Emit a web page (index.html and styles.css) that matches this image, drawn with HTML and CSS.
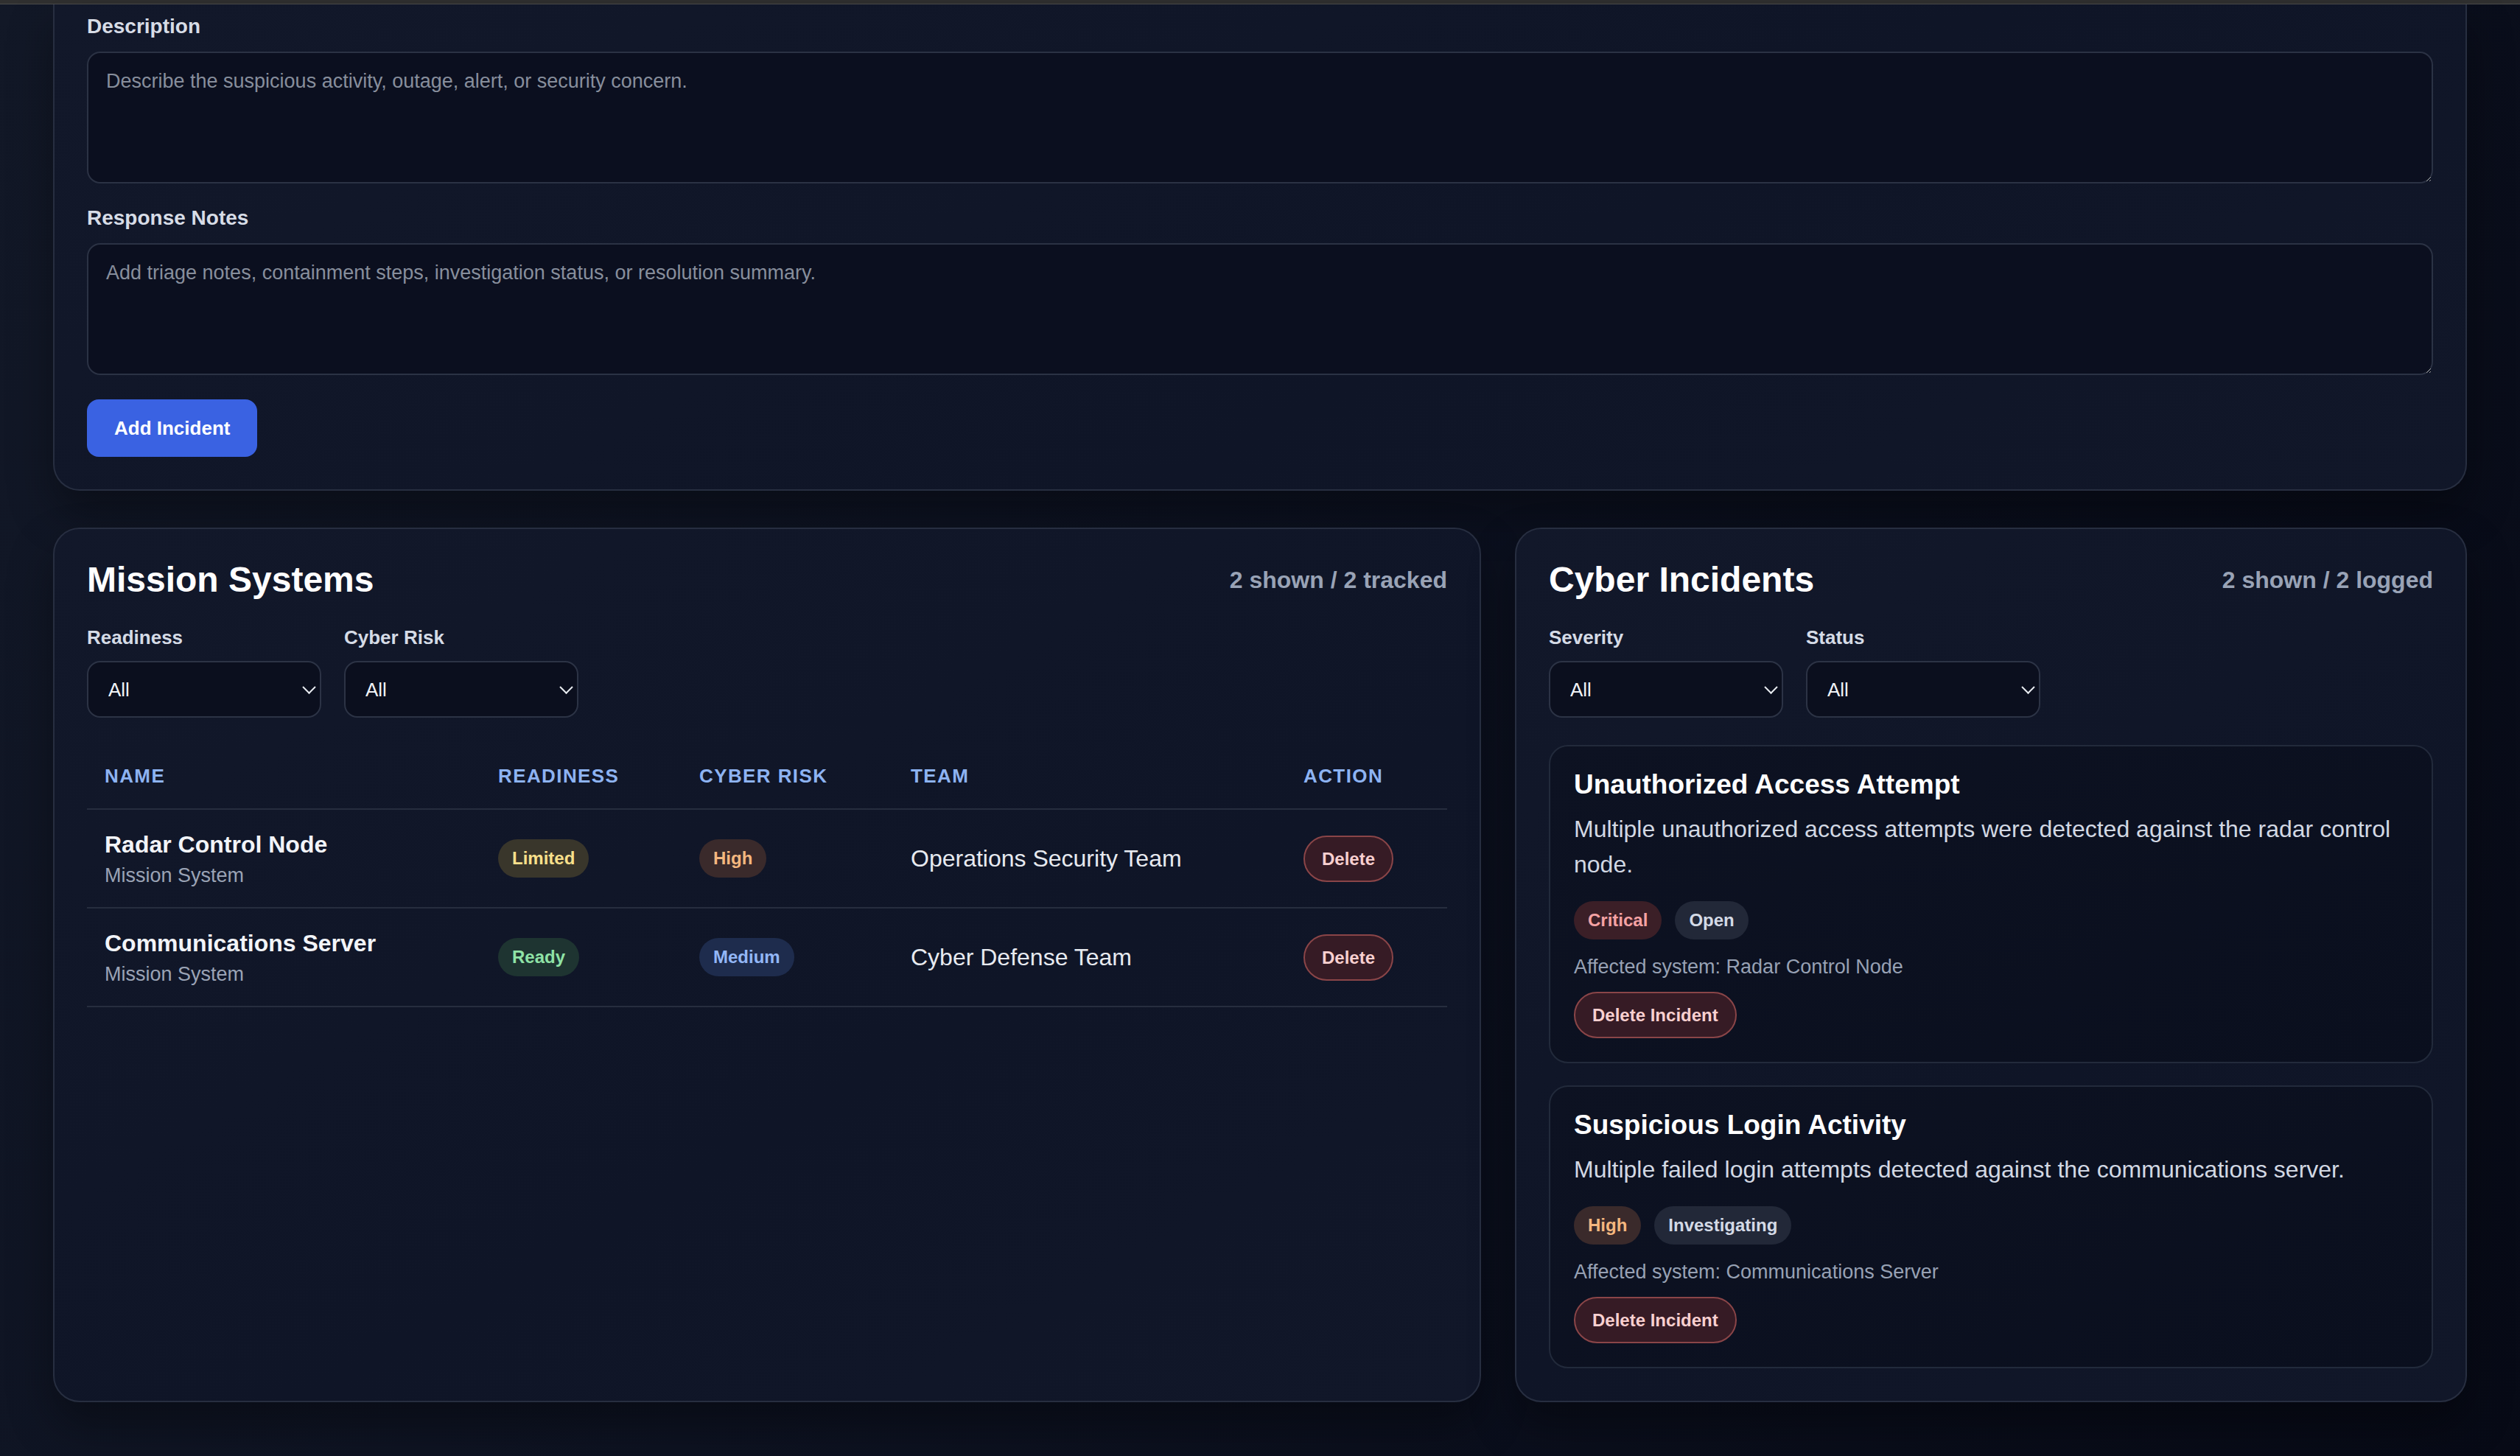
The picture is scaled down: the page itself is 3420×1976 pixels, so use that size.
FILE: index.html
```html
<!DOCTYPE html>
<html lang="en">
<head>
<meta charset="utf-8">
<title>Mission Cyber Operations</title>
<link rel="stylesheet" href="styles.css">
</head>
<body>
<div class="topbar"></div>
<main class="page">
  <section class="card form-card">
    <label class="field-label" for="desc">Description</label>
    <textarea id="desc" class="field-text" placeholder="Describe the suspicious activity, outage, alert, or security concern."></textarea>
    <label class="field-label field-gap" for="notes">Response Notes</label>
    <textarea id="notes" class="field-text" placeholder="Add triage notes, containment steps, investigation status, or resolution summary."></textarea>
    <button class="btn-primary" type="button">Add Incident</button>
  </section>

  <div class="columns">
    <section class="card panel">
      <div class="panel-head">
        <h2 class="panel-title">Mission Systems</h2>
        <span class="panel-count">2 shown / 2 tracked</span>
      </div>
      <div class="filters">
        <div class="filter">
          <label class="filter-label">Readiness</label>
          <div class="select-wrap"><select class="select"><option>All</option></select></div>
        </div>
        <div class="filter">
          <label class="filter-label">Cyber Risk</label>
          <div class="select-wrap"><select class="select"><option>All</option></select></div>
        </div>
      </div>
      <table class="sys-table">
        <colgroup>
          <col class="c-name"><col class="c-ready"><col class="c-risk"><col class="c-team"><col class="c-action">
        </colgroup>
        <thead>
          <tr><th>Name</th><th>Readiness</th><th>Cyber Risk</th><th>Team</th><th>Action</th></tr>
        </thead>
        <tbody>
          <tr>
            <td><div class="sys-name">Radar Control Node</div><div class="sys-type">Mission System</div></td>
            <td><span class="pill pill-limited">Limited</span></td>
            <td><span class="pill pill-high">High</span></td>
            <td>Operations Security Team</td>
            <td><button class="btn-danger" type="button">Delete</button></td>
          </tr>
          <tr>
            <td><div class="sys-name">Communications Server</div><div class="sys-type">Mission System</div></td>
            <td><span class="pill pill-ready">Ready</span></td>
            <td><span class="pill pill-medium">Medium</span></td>
            <td>Cyber Defense Team</td>
            <td><button class="btn-danger" type="button">Delete</button></td>
          </tr>
        </tbody>
      </table>
    </section>

    <section class="card panel">
      <div class="panel-head">
        <h2 class="panel-title">Cyber Incidents</h2>
        <span class="panel-count">2 shown / 2 logged</span>
      </div>
      <div class="filters">
        <div class="filter">
          <label class="filter-label">Severity</label>
          <div class="select-wrap"><select class="select"><option>All</option></select></div>
        </div>
        <div class="filter">
          <label class="filter-label">Status</label>
          <div class="select-wrap"><select class="select"><option>All</option></select></div>
        </div>
      </div>
      <div class="incidents">
        <article class="incident">
          <h3 class="incident-title">Unauthorized Access Attempt</h3>
          <p class="incident-desc">Multiple unauthorized access attempts were detected against the radar control node.</p>
          <div class="incident-tags">
            <span class="pill pill-critical">Critical</span>
            <span class="pill pill-neutral">Open</span>
          </div>
          <p class="incident-meta">Affected system: Radar Control Node</p>
          <button class="btn-danger" type="button">Delete Incident</button>
        </article>
        <article class="incident">
          <h3 class="incident-title">Suspicious Login Activity</h3>
          <p class="incident-desc">Multiple failed login attempts detected against the communications server.</p>
          <div class="incident-tags">
            <span class="pill pill-high">High</span>
            <span class="pill pill-neutral">Investigating</span>
          </div>
          <p class="incident-meta">Affected system: Communications Server</p>
          <button class="btn-danger" type="button">Delete Incident</button>
        </article>
      </div>
    </section>
  </div>
</main>
</body>
</html>
```

FILE: styles.css
```css
* { box-sizing: border-box; }

html, body {
  margin: 0;
  min-height: 100%;
}

body {
  font-family: "Liberation Sans", Arial, Helvetica, sans-serif;
  color: #e7eaf0;
  background: linear-gradient(120deg, #121827 0%, #0d1221 45%, #070a16 100%);
  min-height: 1976px;
}

.topbar {
  height: 6px;
  background: #303030;
  border-bottom: 1px solid #4b4b4b;
}

.page {
  padding: 0 72px 74px;
}

.card {
  background: linear-gradient(150deg, #12182a 0%, #0f1527 60%, #111729 100%);
  border: 2px solid #272e40;
  border-radius: 36px;
  box-shadow: 0 30px 60px rgba(0, 0, 0, 0.35);
}

.form-card {
  border-top: none;
  border-radius: 0 0 36px 36px;
  padding: 14px 44px 44px;
}

.field-label {
  display: block;
  font-size: 28px;
  line-height: 32px;
  font-weight: 700;
  color: #d7dce6;
  margin-bottom: 18px;
}

.field-gap {
  margin-top: 31px;
}

.field-text {
  display: block;
  width: 100%;
  height: 179px;
  resize: vertical;
  background: #0b0f1f;
  border: 2px solid #2b3244;
  border-radius: 18px;
  padding: 20px 24px;
  font-family: inherit;
  font-size: 27px;
  line-height: 36px;
  color: #e7eaf0;
  outline: none;
}

.field-text::placeholder {
  color: #878e9c;
}

.btn-primary {
  margin-top: 33px;
  height: 78px;
  padding: 0 37px;
  border: none;
  border-radius: 16px;
  background: #3a62e2;
  color: #ffffff;
  font-family: inherit;
  font-size: 26px;
  font-weight: 700;
}

.columns {
  margin-top: 50px;
  display: grid;
  grid-template-columns: 3fr 2fr;
  gap: 46px;
  align-items: stretch;
}

.panel {
  padding: 44px;
}

.panel-head {
  display: flex;
  justify-content: space-between;
  align-items: center;
}

.panel-title {
  margin: 0;
  font-size: 48px;
  line-height: 50px;
  font-weight: 700;
  color: #ffffff;
}

.panel-count {
  font-size: 32px;
  font-weight: 700;
  color: #99a3b6;
}

.filters {
  display: flex;
  gap: 31px;
  margin-top: 38px;
}

.filter {
  display: flex;
  flex-direction: column;
}

.filter-label {
  font-size: 26px;
  line-height: 30px;
  font-weight: 700;
  color: #d5dbe6;
  margin-bottom: 17px;
}

.select-wrap {
  position: relative;
  width: 318px;
  height: 77px;
}

.select-wrap::after {
  content: "";
  position: absolute;
  right: 10px;
  top: 50%;
  width: 11px;
  height: 11px;
  border-right: 2px solid #e8ebf0;
  border-bottom: 2px solid #e8ebf0;
  transform: translateY(-75%) rotate(45deg);
  pointer-events: none;
}

.select {
  appearance: none;
  -webkit-appearance: none;
  width: 100%;
  height: 100%;
  background: #0b0f1e;
  border: 2px solid #2c3345;
  border-radius: 18px;
  padding: 0 40px 0 27px;
  font-family: inherit;
  font-size: 26px;
  color: #f1f3f7;
  outline: none;
}

.sys-table {
  width: 100%;
  margin-top: 35px;
  border-collapse: collapse;
  table-layout: fixed;
}

.c-name { width: 534px; }
.c-ready { width: 273px; }
.c-risk { width: 287px; }
.c-team { width: 533px; }
.c-action { width: auto; }

.sys-table th {
  text-align: left;
  padding: 28px 24px;
  font-size: 26px;
  line-height: 32px;
  font-weight: 700;
  text-transform: uppercase;
  letter-spacing: 1.4px;
  color: #8db3f2;
  border-bottom: 2px solid #262d3e;
}

.sys-table td {
  padding: 28px 24px;
  font-size: 32px;
  line-height: 37px;
  color: #e7eaf0;
  border-bottom: 2px solid #262d3e;
  vertical-align: middle;
}

.sys-name {
  font-size: 32px;
  line-height: 38px;
  font-weight: 700;
  color: #f2f4f8;
}

.sys-type {
  margin-top: 8px;
  font-size: 27px;
  line-height: 30px;
  color: #9aa3b5;
}

.pill {
  display: inline-block;
  padding: 12px 19px;
  border-radius: 999px;
  font-size: 24px;
  line-height: 28px;
  font-weight: 700;
  vertical-align: middle;
}

.pill-limited { background: #39362b; color: #f9e08b; }
.pill-high { background: #3a2a2b; color: #f4b77f; }
.pill-ready { background: #1e3431; color: #8fe3a6; }
.pill-medium { background: #1e2c4d; color: #93b7f7; }
.pill-critical { background: #3b1f27; color: #f5a2a3; }
.pill-neutral { background: #222838; color: #d4dae6; }

.btn-danger {
  display: inline-block;
  padding: 15px 23px;
  border: 2px solid #8a4548;
  border-radius: 999px;
  background: #361b25;
  color: #f9d0d0;
  font-family: inherit;
  font-size: 24px;
  line-height: 29px;
  font-weight: 700;
}

.incidents {
  margin-top: 37px;
  display: flex;
  flex-direction: column;
  gap: 30px;
}

.incident {
  background: linear-gradient(150deg, #0d1222 0%, #0a0f1e 100%);
  border: 2px solid #222a3b;
  border-radius: 26px;
  padding: 32px;
}

.incident-title {
  margin: 0;
  font-size: 37px;
  line-height: 40px;
  font-weight: 700;
  color: #ffffff;
}

.incident-desc {
  margin: 16px 0 0;
  font-size: 32px;
  line-height: 48px;
  color: #d2d8e3;
}

.incident-tags {
  margin-top: 26px;
  display: flex;
  gap: 18px;
}

.incident-meta {
  margin: 22px 0 0;
  font-size: 27px;
  line-height: 30px;
  color: #97a1b4;
}

.incident .btn-danger {
  margin-top: 19px;
}
```
